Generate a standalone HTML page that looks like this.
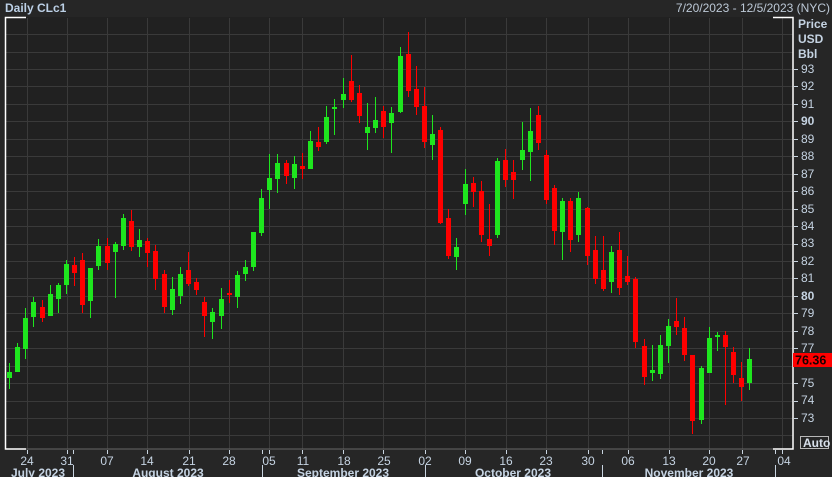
<!DOCTYPE html>
<html><head><meta charset="utf-8"><style>
html,body{margin:0;padding:0;background:#262626;}
svg{display:block;font-family:"Liberation Sans",sans-serif;}
</style></head><body>
<svg id="s" width="832" height="477" viewBox="0 0 832 477" xmlns="http://www.w3.org/2000/svg">
<rect x="0" y="0" width="832" height="477" fill="#262626"/>
<rect x="5" y="17" width="788" height="432" fill="#212121"/>
<g id="grid" stroke="#3a3a3a" stroke-width="1"></g>
<g id="candles"></g>
<!-- borders -->
<g stroke="#ffffff" stroke-width="1.5" fill="none">
<path d="M26 17.5 H5.5 V449 H26"/>
<path d="M773 17.5 H793 V449 H773"/>
</g>
<line x1="26" y1="449" x2="773" y2="449" stroke="#666" stroke-width="1"/>
<g id="rt" stroke="#c8d4e0" stroke-width="1"></g>
<g fill="#c5d3e2" font-size="12">
<text x="5" y="12" font-weight="bold" fill="#bcd0e6">Daily CLc1</text>
<text x="830" y="12" text-anchor="end" fill="#bcc8d6">7/20/2023 - 12/5/2023 (NYC)</text>
<text x="798" y="28" font-weight="bold">Price</text>
<text x="798" y="43" font-weight="bold">USD</text>
<text x="798" y="58" font-weight="bold">Bbl</text>
<text x="801" y="73">93</text>
<text x="801" y="90">92</text>
<text x="801" y="108">91</text>
<text x="801" y="125" font-weight="bold">90</text>
<text x="801" y="143">89</text>
<text x="801" y="160">88</text>
<text x="801" y="178">87</text>
<text x="801" y="195">86</text>
<text x="801" y="213">85</text>
<text x="801" y="230">84</text>
<text x="801" y="247">83</text>
<text x="801" y="265">82</text>
<text x="801" y="282">81</text>
<text x="801" y="300" font-weight="bold">80</text>
<text x="801" y="317">79</text>
<text x="801" y="335">78</text>
<text x="801" y="352">77</text>
<text x="801" y="387">75</text>
<text x="801" y="404">74</text>
<text x="801" y="422">73</text>
</g>
<rect x="793" y="353" width="39" height="14" fill="#ff0000"/>
<text x="795" y="364.5" font-size="12.5" font-weight="bold" fill="#1a0000">76.36</text>
<rect x="800.5" y="436.5" width="28" height="12" fill="none" stroke="#b8b8b8"/>
<text x="803" y="447" font-size="12" font-weight="bold" fill="#d8e0ea">Auto</text>
<g id="bt" stroke="#c8d4e0" stroke-width="1"></g>
<g fill="#c5d3e2" font-size="12" text-anchor="middle">
<text x="27" y="465">24</text><text x="67" y="465">31</text><text x="107" y="465">07</text>
<text x="147" y="465">14</text><text x="189" y="465">21</text><text x="229" y="465">28</text>
<text x="269" y="465">05</text><text x="303" y="465">11</text><text x="344" y="465">18</text>
<text x="384" y="465">25</text><text x="425" y="465">02</text><text x="465" y="465">09</text>
<text x="506" y="465">16</text><text x="546" y="465">23</text><text x="588" y="465">30</text>
<text x="628" y="465">06</text><text x="669" y="465">13</text><text x="709" y="465">20</text>
<text x="743" y="465">27</text><text x="784" y="465">04</text>
</g>
<g fill="#c5d3e2" font-size="12" font-weight="bold" text-anchor="middle">
<text x="38" y="477">July 2023</text>
<text x="168" y="477">August 2023</text>
<text x="343" y="477">September 2023</text>
<text x="513" y="477">October 2023</text>
<text x="689" y="477">November 2023</text>
</g>
</svg>
<script>
var NS="http://www.w3.org/2000/svg";
function el(p,t,a){var e=document.createElementNS(NS,t);for(var k in a)e.setAttribute(k,a[k]);p.appendChild(e);return e;}
var grid=document.getElementById('grid'),rt=document.getElementById('rt'),bt=document.getElementById('bt');
function yp(p){return 69+(93-p)*17.45;}
for(var p=72;p<=96;p++){var y=Math.round(yp(p))+0.5;if(y>18&&y<449)el(grid,'line',{x1:6,x2:793,y1:y,y2:y});
 if(y>60&&y<430&&p!=76)el(rt,'line',{x1:794,x2:798,y1:y,y2:y});}
var xs=[27,67,107,147,189,229,269,302,343,383,425,465,506,546,588,628,669,709,742,782];
xs.forEach(function(x){el(grid,'line',{x1:x+.5,x2:x+.5,y1:18,y2:449});el(bt,'line',{x1:x+.5,x2:x+.5,y1:450,y2:454});});
[73,262,602,775].forEach(function(x){el(bt,'line',{x1:x+.5,x2:x+.5,y1:450,y2:454});});
[73,262,425,602,775].forEach(function(x){el(bt,'line',{x1:x+.5,x2:x+.5,y1:465,y2:477});});
var d=`9,363,389,372,378,g
17,343,372,347,372,g
25,308,359,318,349,g
33,297,327,302,317,g
42,300,322,307,318,r
50,285,316,294,316,g
58,283,313,285,299,g
66,260,294,264,285,g
74,257,286,265,273,r
82,253,313,260,305,r
90,268,318,268,301,g
98,239,270,246,266,g
107,238,270,246,263,r
115,242,298,244,252,g
123,214,250,218,246,g
131,210,251,221,247,r
139,229,257,240,247,g
147,238,267,241,253,r
155,245,290,251,279,r
164,270,313,274,307,r
172,277,315,289,310,g
180,267,304,274,296,g
188,252,286,270,284,r
196,278,295,282,290,r
204,297,337,302,316,r
212,308,339,312,322,g
221,288,329,299,316,g
229,280,303,293,295,r
237,271,308,275,297,g
245,260,281,267,274,g
253,232,271,232,267,g
261,189,236,198,233,g
269,154,209,178,190,g
277,154,193,163,179,g
286,160,184,163,176,r
294,156,189,164,178,g
302,153,179,166,169,r
310,131,169,141,169,g
318,127,151,142,147,r
326,106,144,117,142,g
334,99,135,107,109,g
343,78,108,94,100,g
351,55,102,81,100,r
359,85,123,93,116,r
367,103,150,127,133,g
375,97,133,120,128,g
383,106,138,111,127,r
391,107,153,113,123,g
400,47,113,56,112,g
408,32,97,54,91,r
416,66,115,89,107,r
424,87,148,106,142,r
432,115,160,134,145,g
440,127,224,130,223,r
448,209,259,218,256,r
456,238,270,247,257,g
465,169,215,184,204,g
473,177,207,183,192,r
481,181,242,191,235,r
489,204,256,239,246,r
497,158,238,161,235,g
505,149,187,160,180,r
513,160,199,172,180,r
522,122,170,150,160,g
530,108,181,131,152,g
538,106,150,115,143,r
546,150,204,155,200,r
554,185,245,188,231,r
562,198,260,201,232,g
570,198,252,201,240,r
578,192,242,198,235,g
587,207,265,208,256,r
595,236,284,250,279,r
603,236,291,270,289,r
611,246,293,252,282,g
619,232,295,250,288,r
627,256,285,276,282,r
635,277,348,279,342,r
644,339,385,346,377,r
652,345,381,370,373,g
660,335,379,345,374,g
668,319,363,326,346,g
676,298,335,321,327,r
684,317,361,328,355,r
692,355,434,355,421,r
701,366,424,368,420,g
709,327,373,338,373,g
717,332,351,335,337,g
725,331,405,335,347,r
733,347,383,352,375,r
741,362,401,378,387,r
749,348,390,359,383,g`;
var cg=document.getElementById('candles');
d.split('\n').forEach(function(l){var a=l.split(',');var x=+a[0],wt=+a[1],wb=+a[2],bt_=+a[3],bb=+a[4];var c=a[5]=='g'?'#1ee61e':'#ff0000';
el(cg,'rect',{x:x,y:wt,width:1,height:wb-wt,fill:c});
el(cg,'rect',{x:x-2,y:bt_,width:5,height:Math.max(2,bb-bt_),fill:c});});
</script>
</body></html>
